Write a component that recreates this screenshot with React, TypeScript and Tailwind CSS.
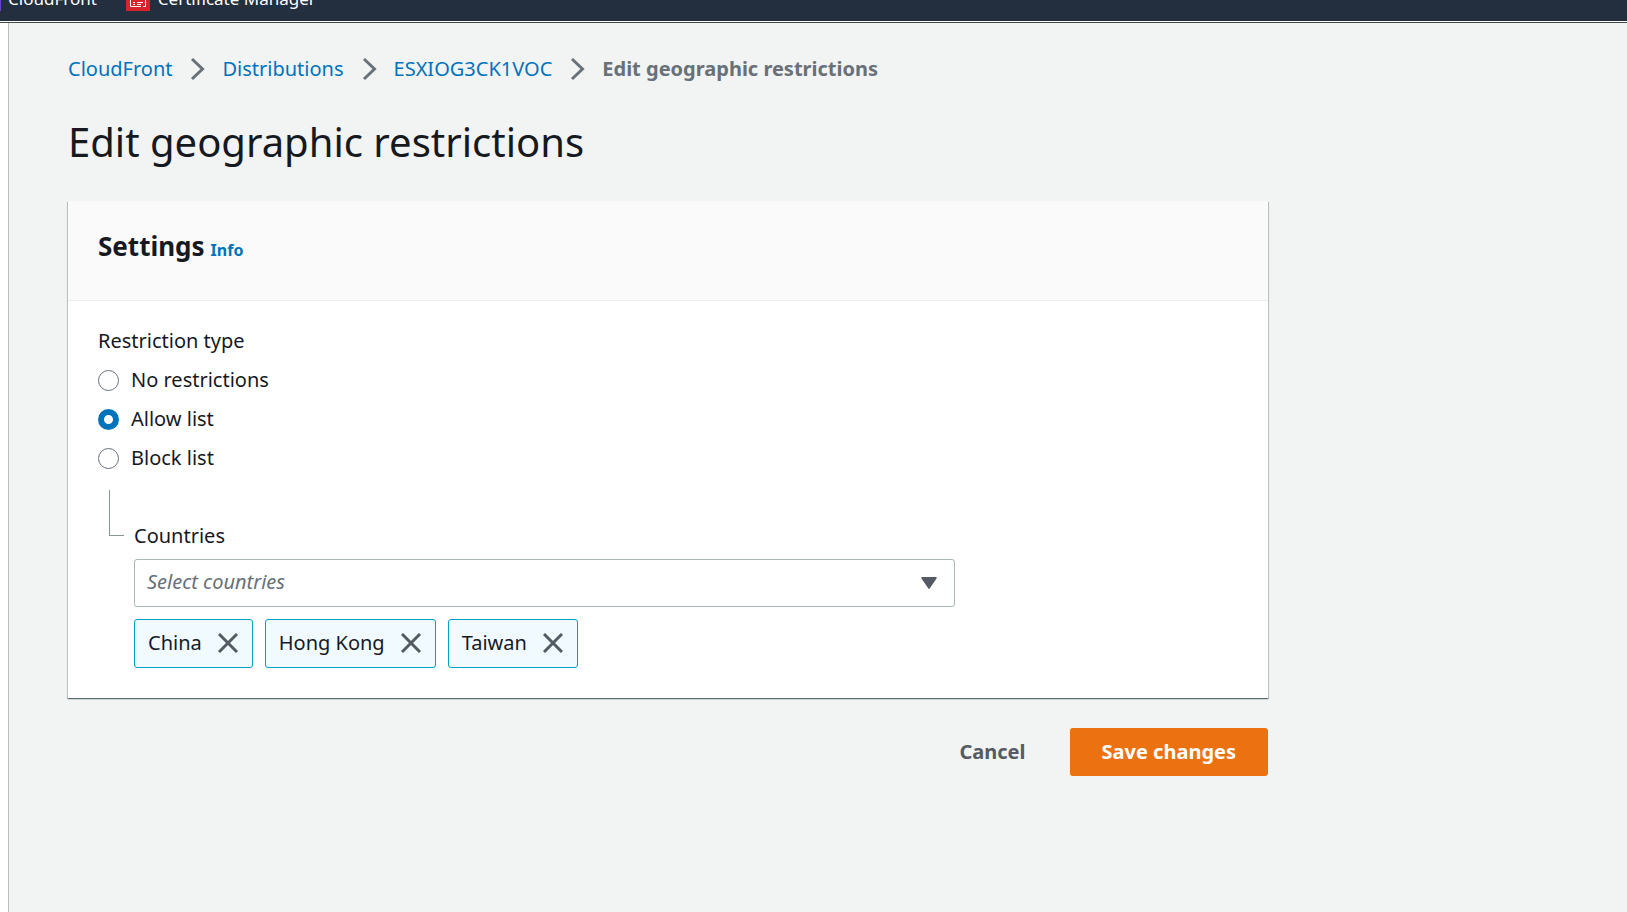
import { useState } from 'react';

const restrictionTypes = [
  { id: 'none', label: 'No restrictions' },
  { id: 'allow', label: 'Allow list' },
  { id: 'block', label: 'Block list' },
];

function Chevron() {
  return (
    <svg viewBox="0 0 16 24" className="w-4 h-6 shrink-0" fill="none" stroke="#687078" strokeWidth="3" aria-hidden="true">
      <path d="M3 2 L13.5 12 L3 22" />
    </svg>
  );
}

function CertificateIcon() {
  return (
    <svg viewBox="0 0 24 24" className="w-6 h-6 shrink-0" aria-hidden="true">
      <rect width="24" height="24" fill="#d6242d" />
      <g fill="none" stroke="#fff" strokeWidth="1">
        <path d="M17 19.5 H19.5 V5 H4.5 V19.5 H15" />
        <path d="M9 12.5 H11 M13 12.5 H15 M7 15.5 H9 M11 15.5 H17 M7 17.5 H9 M11 17.5 H15" />
      </g>
    </svg>
  );
}

function TopBar() {
  return (
    <header className="h-[21px] overflow-hidden bg-[#232f3e] text-white">
      <nav className="-ml-[23px] flex h-full items-end pb-2.5 text-[17px] leading-6">
        <a href="#cloudfront" className="flex shrink-0 items-center gap-[7px]">
          <span className="w-6 h-6 bg-[#6b3fd4]" />
          CloudFront
        </a>
        <a href="#acm" className="ml-[29px] flex shrink-0 items-center gap-2">
          <CertificateIcon />
          Certificate Manager
        </a>
      </nav>
    </header>
  );
}

export default function App() {
  const [type, setType] = useState('allow');
  const [countries, setCountries] = useState(['China', 'Hong Kong', 'Taiwan']);

  return (
    <div className="flex min-h-screen flex-col bg-[#f2f3f3] font-['Noto_Sans',sans-serif] text-[20px] leading-[30px] text-[#16191f]">
      <TopBar />
      <div className="h-0.5 border-b border-[#414750] bg-white" />

      <div className="flex flex-1">
        <div className="w-2 shrink-0 bg-white" />
        <main className="flex-1 border-l border-[#b9bebe] pr-[59px] pl-[59px] pt-[31px]">
          <nav aria-label="Breadcrumb" className="flex items-center gap-[17px] text-[#0073bb]">
            <a href="#cloudfront">CloudFront</a>
            <Chevron />
            <a href="#distributions">Distributions</a>
            <Chevron />
            <a href="#distribution">ESXIOG3CK1VOC</a>
            <Chevron />
            <span className="font-bold text-[#687078]">Edit geographic restrictions</span>
          </nav>

          <form className="max-w-[1200px]" onSubmit={(e) => e.preventDefault()}>
            <h1 className="mt-7 text-[40px] leading-[60px]">Edit geographic restrictions</h1>

            <section className="mt-[29px] bg-white shadow-[0_1px_1px_0_#001c2480,1px_1px_1px_0_#001c2426,-1px_1px_1px_0_#001c2426]">
              <div className="flex h-[100px] items-baseline gap-1.5 border-b border-[#eaeded] bg-[#fafafa] px-[30px] pt-[25px]">
                <h2 className="text-[26px] leading-10 font-bold">Settings</h2>
                <a href="#info" className="text-[16px] font-bold text-[#0073bb]">Info</a>
              </div>

              <div className="px-[30px] pt-[25px] pb-[30px]">
                <fieldset>
                  <legend>Restriction type</legend>
                  {restrictionTypes.map((item) => (
                    <label key={item.id} className="mt-[9px] flex items-center gap-3">
                      <input
                        type="radio"
                        name="restriction"
                        checked={type === item.id}
                        onChange={() => setType(item.id)}
                        className="size-[21px] appearance-none rounded-full border border-[#687078] bg-white checked:border-[6px] checked:border-[#0073bb]"
                      />
                      {item.label}
                    </label>
                  ))}
                </fieldset>

                <div className="mt-[17px] flex gap-2.5 pl-[11px]">
                  <div className="h-[46px] w-[15px] shrink-0 border-b border-l border-[#879596]" />
                  <div className="w-full max-w-[821px] pt-[31px]">
                    <label htmlFor="countries">Countries</label>
                    <div className="relative mt-2">
                      <select
                        id="countries"
                        value=""
                        onChange={(e) => setCountries([...countries, e.target.value])}
                        className="block h-12 w-full appearance-none rounded-[3px] border border-[#aab7b8] bg-white px-3 pb-0.5 italic text-[#687078]"
                      >
                        <option value="">Select countries</option>
                        <option>Japan</option>
                        <option>Singapore</option>
                      </select>
                      <svg viewBox="0 0 16 12" className="pointer-events-none absolute top-[18px] right-[18px] h-3 w-4" fill="#545b64" aria-hidden="true">
                        <path d="M1 0 H15 Q16 .4 15.5 1.4 L8.7 11.6 Q8 12.4 7.3 11.6 L.5 1.4 Q0 .4 1 0 Z" />
                      </svg>
                    </div>
                    <div className="mt-3 flex flex-wrap gap-3">
                      {countries.map((country) => (
                        <span key={country} className="flex h-[49px] items-center gap-4 rounded-[3px] border border-[#00a1c9] bg-[#f1faff] pr-3.5 pl-[13px] pb-0.5">
                          {country}
                          <button
                            type="button"
                            aria-label={`Remove ${country}`}
                            onClick={() => setCountries(countries.filter((c) => c !== country))}
                          >
                            <svg viewBox="0 0 20 20" className="size-5" fill="none" stroke="#545b64" strokeWidth="3">
                              <path d="M1 1 L19 19 M19 1 L1 19" />
                            </svg>
                          </button>
                        </span>
                      ))}
                    </div>
                  </div>
                </div>
              </div>
            </section>

            <div className="mt-[30px] flex justify-end gap-3 font-bold">
              <button type="button" className="h-12 px-8 text-[#545b64]">Cancel</button>
              <button type="submit" className="h-12 rounded-[3px] bg-[#ec7211] px-8 text-white">Save changes</button>
            </div>
          </form>
        </main>
      </div>
    </div>
  );
}
